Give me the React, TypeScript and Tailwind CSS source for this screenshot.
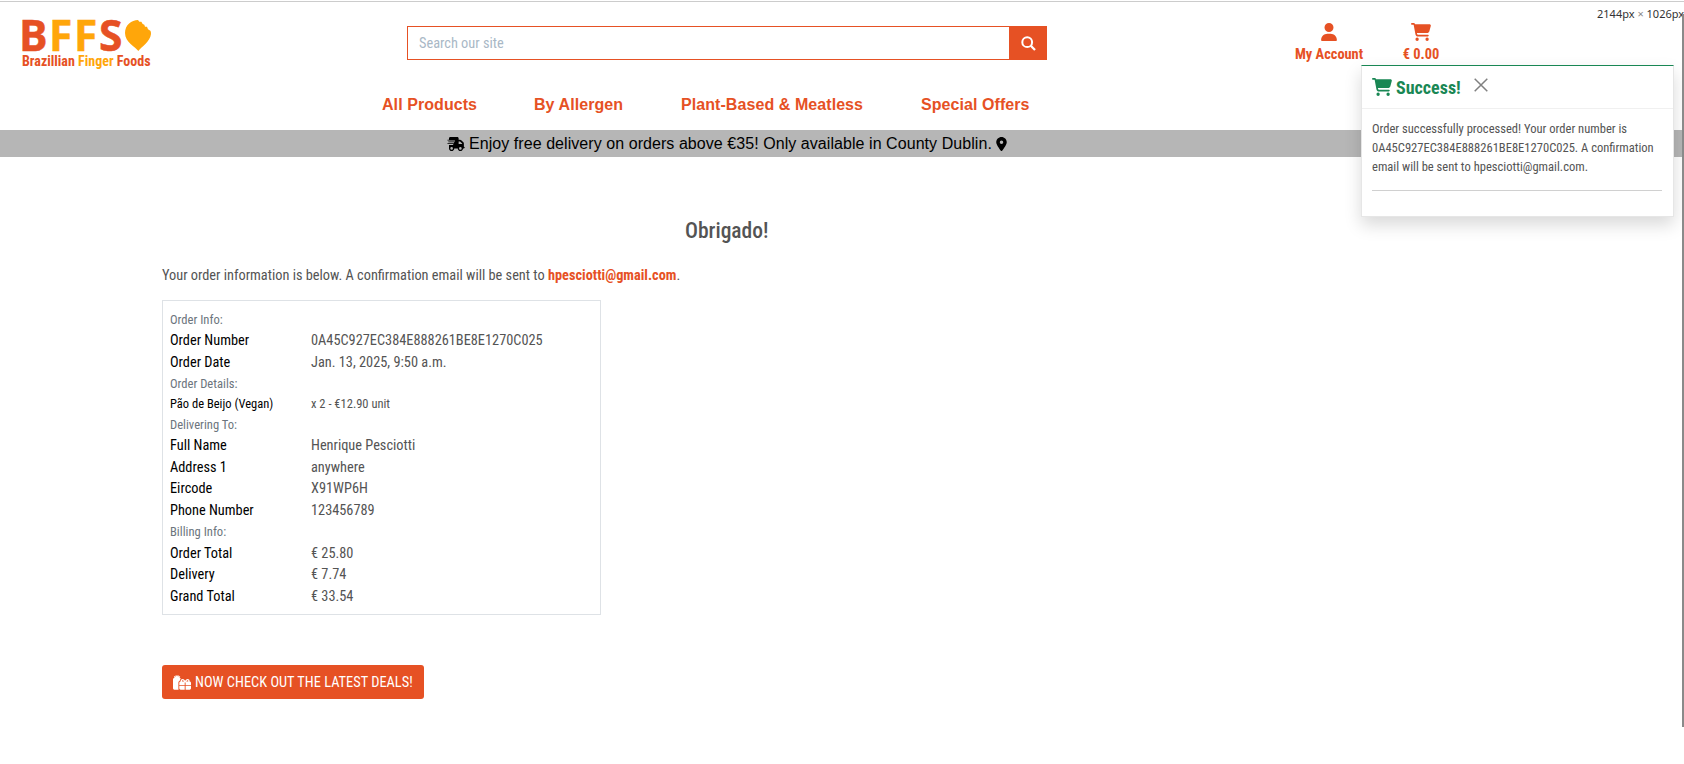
import React from "react";
import { FaTruckFast, FaLocationDot, FaUser, FaCartShopping, FaGifts } from "react-icons/fa6";

const nav = [
  { label: "All Products", pos: "ml-[382px] w-[152px]" },
  { label: "By Allergen", pos: "w-[147px]" },
  { label: "Plant-Based & Meatless", pos: "w-[240px]" },
  { label: "Special Offers", pos: "w-[120px]" },
];

type Row = { label: string; value?: string; kind?: "head" | "small"; h: string };

const rows: Row[] = [
  { label: "Order Info:", kind: "head", h: "h-[21px]" },
  { label: "Order Number", value: "0A45C927EC384E888261BE8E1270C025", h: "h-[22px]" },
  { label: "Order Date", value: "Jan. 13, 2025, 9:50 a.m.", h: "h-[21px]" },
  { label: "Order Details:", kind: "head", h: "h-[20px]" },
  { label: "Pão de Beijo (Vegan)", value: "x 2 - €12.90 unit", kind: "small", h: "h-[21px]" },
  { label: "Delivering To:", kind: "head", h: "h-[21px]" },
  { label: "Full Name", value: "Henrique Pesciotti", h: "h-[22px]" },
  { label: "Address 1", value: "anywhere", h: "h-[21px]" },
  { label: "Eircode", value: "X91WP6H", h: "h-[22px]" },
  { label: "Phone Number", value: "123456789", h: "h-[21px]" },
  { label: "Billing Info:", kind: "head", h: "h-[22px]" },
  { label: "Order Total", value: "€ 25.80", h: "h-[21px]" },
  { label: "Delivery", value: "€ 7.74", h: "h-[22px]" },
  { label: "Grand Total", value: "€ 33.54", h: "h-[22px]" },
];

function Logo() {
  return (
    <div className="ml-[19px] mt-[15px] w-[135px]">
      <div className="flex h-[35px] items-center font-['Open_Sans',sans-serif] text-[42.5px] font-bold leading-[35px] text-[#e65124] [font-stretch:100%]">
        <span className="w-[30px] [-webkit-text-stroke:0.5px_#e65124]">B</span>
        <span className="w-[25px] text-[#ffa60a] [-webkit-text-stroke:0.5px_#ffa60a]">F</span>
        <span className="w-[25px] text-[#ffa60a] [-webkit-text-stroke:0.5px_#ffa60a]">F</span>
        <span className="w-[26px] [-webkit-text-stroke:0.5px_#e65124]">S</span>
        <svg className="mt-[2px] h-[31px] w-[26px]" viewBox="0 0 78 93">
          <path d="M40 93C32 81 0 67 0 39C0 15 20 0 39 0L43 5L49 5L53 12L58 14L60 20L66 20L69 28L76 32C78 35 78 38 78 42C76 65 48 82 40 93Z" fill="#ffa60a" />
        </svg>
      </div>
      <div className="ml-[3px] mt-px whitespace-nowrap text-[14px] font-bold leading-[17px] text-[#e65124]">
        Brazillian <span className="text-[#ffa60a]">Finger</span> Foods
      </div>
    </div>
  );
}

function Toast() {
  return (
    <div className="absolute left-[1361px] top-[65px] h-[152px] w-[313px] border border-t-[#198754] border-[#e6e6e6] bg-white shadow-[0_8px_16px_rgba(0,0,0,0.15)]">
      <div className="flex h-[43px] items-center border-b border-[#f0f0f0] pl-[10px] text-[#198754]">
        <FaCartShopping className="h-[18px] w-[20px]" />
        <span className="ml-[4px] pt-px text-[18px] font-bold">Success!</span>
        <svg className="mb-[4px] ml-[13px] size-[14px]" viewBox="0 0 14 14">
          <path d="M0.7 0.7L13.3 13.3M13.3 0.7L0.7 13.3" stroke="#808080" strokeWidth="1.5" />
        </svg>
      </div>
      <div className="ml-[10px] mr-[11px] h-[82px] border-b border-[#d0d0d0] pt-[10px] text-[12.55px] leading-[19px] text-[#545454]">
        <p className="whitespace-nowrap">Order successfully processed! Your order number is</p>
        <p className="whitespace-nowrap">0A45C927EC384E888261BE8E1270C025. A confirmation</p>
        <p className="whitespace-nowrap">email will be sent to hpesciotti@gmail.com.</p>
      </div>
    </div>
  );
}

export default function App() {
  return (
    <div className="relative h-[764px] w-[1684px] overflow-hidden bg-white font-['Roboto_Condensed','Roboto',sans-serif] text-[#545454] [font-stretch:75%]">
      <div className="mt-px h-px bg-[#ccc]" />
      <header className="flex h-[78px] items-start">
        <Logo />
        <div className="ml-[253px] mt-[24px] flex h-[34px] w-[640px] border border-[#e65124]">
          <div className="flex flex-1 items-center pl-[11px] pt-px text-[14.35px] text-[#a9b8c6]">Search our site</div>
          <div className="flex w-[37px] items-center justify-center bg-[#e65124] pl-px text-white">
            <svg className="size-[15px]" viewBox="0 0 15 15" fill="none" stroke="currentColor" strokeWidth="2">
              <circle cx="6.2" cy="6.2" r="4.9" />
              <path d="M9.8 9.8L14 14" strokeWidth="2.3" />
            </svg>
          </div>
        </div>
        <div className="ml-[248px] mt-[21px] flex w-[68px] flex-col items-center text-[14.4px] font-bold text-[#e65124]">
          <FaUser className="size-[18px]" />
          <span className="mt-[5px] whitespace-nowrap leading-[18px]">My Account</span>
        </div>
        <div className="ml-[38px] mt-[21px] flex w-[40px] flex-col items-center text-[14.4px] font-bold text-[#e65124]">
          <FaCartShopping className="h-[18px] w-[20px]" />
          <span className="mt-[5px] whitespace-nowrap leading-[18px]">€ 0.00</span>
        </div>
      </header>
      <nav className="flex h-[50px] items-center font-['Liberation_Sans',sans-serif] text-[16px] font-bold tracking-[0.07px] text-[#e65124]">
        {nav.map((n) => (
          <span key={n.label} className={"whitespace-nowrap " + n.pos}>{n.label}</span>
        ))}
      </nav>
      <div className="flex h-[27px] items-center bg-[#b6b6b6] pl-[447px] font-['Liberation_Sans',sans-serif] text-[16px] text-black">
        <FaTruckFast className="h-[14px] w-[18px]" />
        <span className="ml-[4px] whitespace-nowrap tracking-[0.06px]">Enjoy free delivery on orders above €35! Only available in County Dublin.</span>
        <FaLocationDot className="ml-[4px] h-[14px] w-[11px]" />
      </div>
      <main className="pl-[162px]">
        <h1 className="ml-[523px] mt-[62px] text-[21.5px] font-medium leading-[24px]">Obrigado!</h1>
        <p className="mt-[22px] whitespace-nowrap text-[14.33px] leading-[20px]">
          Your order information is below. A confirmation email will be sent to{" "}
          <strong className="font-bold text-[#e65124]">hpesciotti@gmail.com</strong>.
        </p>
        <section className="mt-[15px] h-[315px] w-[439px] border border-[#dee2e6] pl-[7px] pt-[9px]">
          {rows.map((r) => (
            <div key={r.label} className={"flex items-start whitespace-nowrap " + (r.kind ? "leading-[20px] " : "leading-[18px] ") + r.h}>
              <span className={"w-[141px] " + (r.kind === "head" ? "text-[12.6px] text-[#6c757d]" : r.kind === "small" ? "text-[12.5px] text-black" : "text-[14.33px] text-black")}>
                {r.label}
              </span>
              <span className={r.kind === "small" ? "text-[12.5px]" : "text-[14.33px]"}>{r.value}</span>
            </div>
          ))}
        </section>
        <button className="mt-[50px] flex h-[34px] w-[262px] items-center rounded-[3px] bg-[#e65124] pl-[11px] text-[14.4px] text-white">
          <FaGifts className="h-[15px] w-[18px]" />
          <span className="ml-[4px] whitespace-nowrap pt-px">NOW CHECK OUT THE LATEST DEALS!</span>
        </button>
      </main>
      <Toast />
      <div className="absolute left-[1597px] top-[6px] whitespace-nowrap font-['Noto_Sans',sans-serif] text-[11px] leading-[16px] text-[#333] [font-stretch:100%]">
        2144px <span className="text-[#888]">×</span> 1026px
      </div>
      <div className="absolute left-[1682px] top-[14px] h-[713px] w-[2px] bg-[#8a8a8a]" />
    </div>
  );
}
